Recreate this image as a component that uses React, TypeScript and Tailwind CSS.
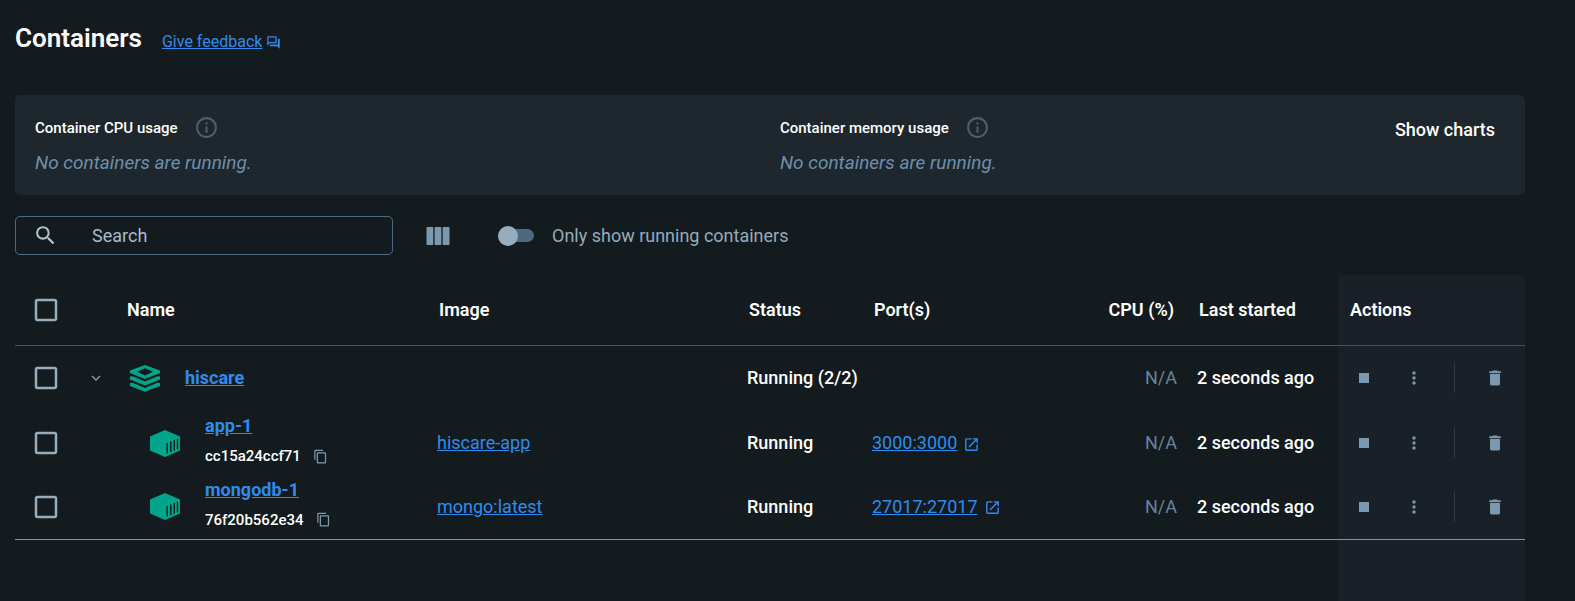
import React, { useState } from "react";
import {
  MdCheckBoxOutlineBlank,
  MdContentCopy,
  MdDelete,
  MdExpandMore,
  MdInfoOutline,
  MdMoreVert,
  MdOpenInNew,
  MdOutlineQuestionAnswer,
  MdSearch,
  MdStop,
} from "react-icons/md";

type Row = {
  name: string;
  id?: string;
  image?: string;
  status: string;
  port?: string;
  cpu: string;
  started: string;
};

const rows: Row[] = [
  { name: "hiscare", status: "Running (2/2)", cpu: "N/A", started: "2 seconds ago" },
  {
    name: "app-1",
    id: "cc15a24ccf71",
    image: "hiscare-app",
    status: "Running",
    port: "3000:3000",
    cpu: "N/A",
    started: "2 seconds ago",
  },
  {
    name: "mongodb-1",
    id: "76f20b562e34",
    image: "mongo:latest",
    status: "Running",
    port: "27017:27017",
    cpu: "N/A",
    started: "2 seconds ago",
  },
];

function StackIcon() {
  return (
    <svg width="30" height="27" viewBox="0 0 30 27" className="shrink-0" aria-hidden="true">
      <path
        fill="#00a58c"
        fillRule="evenodd"
        d="M15 0 30 5.600V8L15 14 0 8V5.600ZM15 3.200 7 6.800 15 10.600 23 6.800Z"
      />
      <path fill="#00a58c" d="M0 11.500 2.500 11.200 15 16.600 27.500 11.200 30 11.500V14.400L15 20.400 0 14.400Z" />
      <path fill="#00a58c" d="M0 18 2.500 17.700 15 23 27.500 17.700 30 18V20.900L15 26.800 0 20.900Z" />
    </svg>
  );
}

function ContainerIcon() {
  return (
    <svg width="30" height="27" viewBox="0 0 30 27" className="shrink-0" aria-hidden="true">
      <path fill="#00a58c" d="M15 0 30 6.500V20.400L15 27 0 20.400V6.500Z" />
      <path
        stroke="#141b1e"
        strokeWidth="1.400"
        strokeLinecap="round"
        d="M17.200 13.500V23M20.800 12V21.500M24.300 10.500V20.200M27.500 9.200V18.800"
      />
    </svg>
  );
}

function ColumnsIcon() {
  return (
    <svg width="24" height="18" viewBox="0 0 24 18" fill="#7a98b0" aria-hidden="true">
      <rect x="0.500" width="6.800" height="18" rx="0.800" />
      <rect x="8.600" width="6.800" height="18" rx="0.800" />
      <rect x="16.700" width="6.800" height="18" rx="0.800" />
    </svg>
  );
}

function Tick({ label }: { label: string }) {
  return (
    <label className="relative ml-[18px] flex size-[26px] items-center justify-center">
      <input type="checkbox" aria-label={label} className="peer absolute inset-0 appearance-none" />
      <MdCheckBoxOutlineBlank className="size-[30px] shrink-0 text-[#96adbf] peer-checked:text-[#2e8ced]" />
    </label>
  );
}

function Usage({ title }: { title: string }) {
  return (
    <section>
      <div className="flex items-center gap-4">
        <h2 className="text-[15px] leading-6 font-medium text-white">{title}</h2>
        <button type="button" aria-label={`About ${title}`} className="text-[#555d64]">
          <MdInfoOutline className="size-[25px]" />
        </button>
      </div>
      <p className="mt-[11px] text-[19px] leading-6 text-[#6f8fab] italic">No containers are running.</p>
    </section>
  );
}

function ContainerRow({ row }: { row: Row }) {
  const child = Boolean(row.id);
  return (
    <tr className={child ? "h-16" : "h-[66px]"}>
      <td>
        <Tick label={`Select ${row.name}`} />
      </td>
      <td>
        {!child && (
          <button type="button" aria-label="Collapse" className="ml-2.5 block text-[#7a98b0]">
            <MdExpandMore className="size-[18px]" />
          </button>
        )}
      </td>
      <td>
        {child ? (
          <div className="flex items-center gap-[25px] pl-[35px]">
            <ContainerIcon />
            <div className="pb-1.5">
              <a href="#" className="block w-fit text-[18px] leading-7 font-bold text-[#2e8ced] underline">
                {row.name}
              </a>
              <div className="mt-1 flex items-center gap-3 text-[15px] leading-6 font-medium">
                {row.id}
                <button type="button" aria-label="Copy ID" className="text-[#7a98b0]">
                  <MdContentCopy className="size-[15px]" />
                </button>
              </div>
            </div>
          </div>
        ) : (
          <div className="flex items-center gap-[25px] pl-[15px]">
            <StackIcon />
            <a href="#" className="text-[18px] leading-6 font-bold text-[#2e8ced] underline">
              {row.name}
            </a>
          </div>
        )}
      </td>
      <td className="pl-3">
        {row.image && (
          <a href="#" className="text-[#2e8ced] underline">
            {row.image}
          </a>
        )}
      </td>
      <td className="pl-3 font-medium whitespace-nowrap">{row.status}</td>
      <td className="pl-3">
        {row.port && (
          <a href="#" className="flex w-fit items-center gap-1.5 text-[#2e8ced]">
            <span className="underline">{row.port}</span>
            <MdOpenInNew className="mt-0.5 size-[17px]" />
          </a>
        )}
      </td>
      <td className="pr-2 text-right text-[#67839c]">{row.cpu}</td>
      <td className="pl-3 font-medium whitespace-nowrap">{row.started}</td>
      <td>
        <div className="flex h-[30px] items-center text-[#7a98b0]">
          <button type="button" aria-label="Stop" className="flex w-[52px] justify-center">
            <MdStop className="size-5" />
          </button>
          <button type="button" aria-label="More" className="flex w-12 justify-center">
            <MdMoreVert className="size-5" />
          </button>
          <span className="ml-4 h-[30px] w-px bg-[#333a42]" />
          <button type="button" aria-label="Delete" className="ml-[30px] flex">
            <MdDelete className="size-5" />
          </button>
        </div>
      </td>
    </tr>
  );
}

export default function App() {
  const [onlyRunning, setOnlyRunning] = useState(false);
  return (
    <main className="flex min-h-screen flex-col bg-[#141b1e] pr-[50px] pl-[15px] font-['Roboto',sans-serif] text-white">
      <header className="flex items-baseline gap-5 pt-5">
        <h1 className="text-[26px] leading-9 font-semibold">Containers</h1>
        <a href="#" className="flex items-center gap-1 text-[16px] leading-6 text-[#2e8ced]">
          <span className="underline">Give feedback</span>
          <MdOutlineQuestionAnswer className="size-[15px]" />
        </a>
      </header>

      <div className="mt-[39px] flex rounded-[5px] bg-[#1d272d] p-5">
        <div className="grid grow grid-cols-2">
          <Usage title="Container CPU usage" />
          <div className="pl-[65px]">
            <Usage title="Container memory usage" />
          </div>
        </div>
        <button type="button" className="mr-2.5 self-start pt-[3px] text-[18px] leading-6 font-medium whitespace-nowrap">
          Show charts
        </button>
      </div>

      <div className="mt-[21px] flex items-center">
        <label className="flex h-[39px] w-[378px] items-center rounded-[5px] border border-[#4d6985] pl-[17px]">
          <MdSearch className="size-[25px] shrink-0 text-[#b0c2cf]" />
          <input
            type="search"
            aria-label="Search"
            placeholder="Search"
            className="ml-[34px] min-w-0 grow bg-transparent text-[18px] outline-none placeholder:text-[#a6bccd]"
          />
        </label>
        <button type="button" aria-label="Columns" className="ml-[33px]">
          <ColumnsIcon />
        </button>
        <label className="ml-12 flex items-center gap-[18px] text-[18px] leading-6 text-[#93abbd]">
          <span className="flex h-5 w-9 items-center">
            <input
              type="checkbox"
              role="switch"
              checked={onlyRunning}
              onChange={(e) => setOnlyRunning(e.target.checked)}
              className="flex h-[13px] w-9 appearance-none items-center rounded-full bg-[#4d6982] before:size-5 before:rounded-full before:bg-[#96adbd] checked:justify-end"
            />
          </span>
          Only show running containers
        </label>
      </div>

      <div className="mt-5 grow rounded-tr-[5px] bg-[linear-gradient(to_left,#1a2028_187px,transparent_187px)]">
        <table className="w-full table-fixed border-collapse text-[18px] leading-6">
          <colgroup>
            <col className="w-[62px]" />
            <col className="w-[38px]" />
            <col />
            <col />
            <col className="w-[125px]" />
            <col className="w-[230px]" />
            <col className="w-[95px]" />
            <col className="w-[153px]" />
            <col className="w-[187px]" />
          </colgroup>
          <thead>
            <tr className="h-[70px] border-b border-[#515151] text-left [&>th]:font-semibold">
              <th>
                <Tick label="Select all containers" />
              </th>
              <th colSpan={2} className="pl-[50px]">
                Name
              </th>
              <th className="pl-[14px]">Image</th>
              <th className="pl-[14px]">Status</th>
              <th className="pl-[14px]">Port(s)</th>
              <th className="pr-[11px] text-right whitespace-nowrap">CPU (%)</th>
              <th className="pl-[14px]">Last started</th>
              <th className="pl-3">Actions</th>
            </tr>
          </thead>
          <tbody className="border-b border-[#7a98a8]">
            {rows.map((row) => (
              <ContainerRow key={row.name} row={row} />
            ))}
          </tbody>
        </table>
      </div>
    </main>
  );
}
